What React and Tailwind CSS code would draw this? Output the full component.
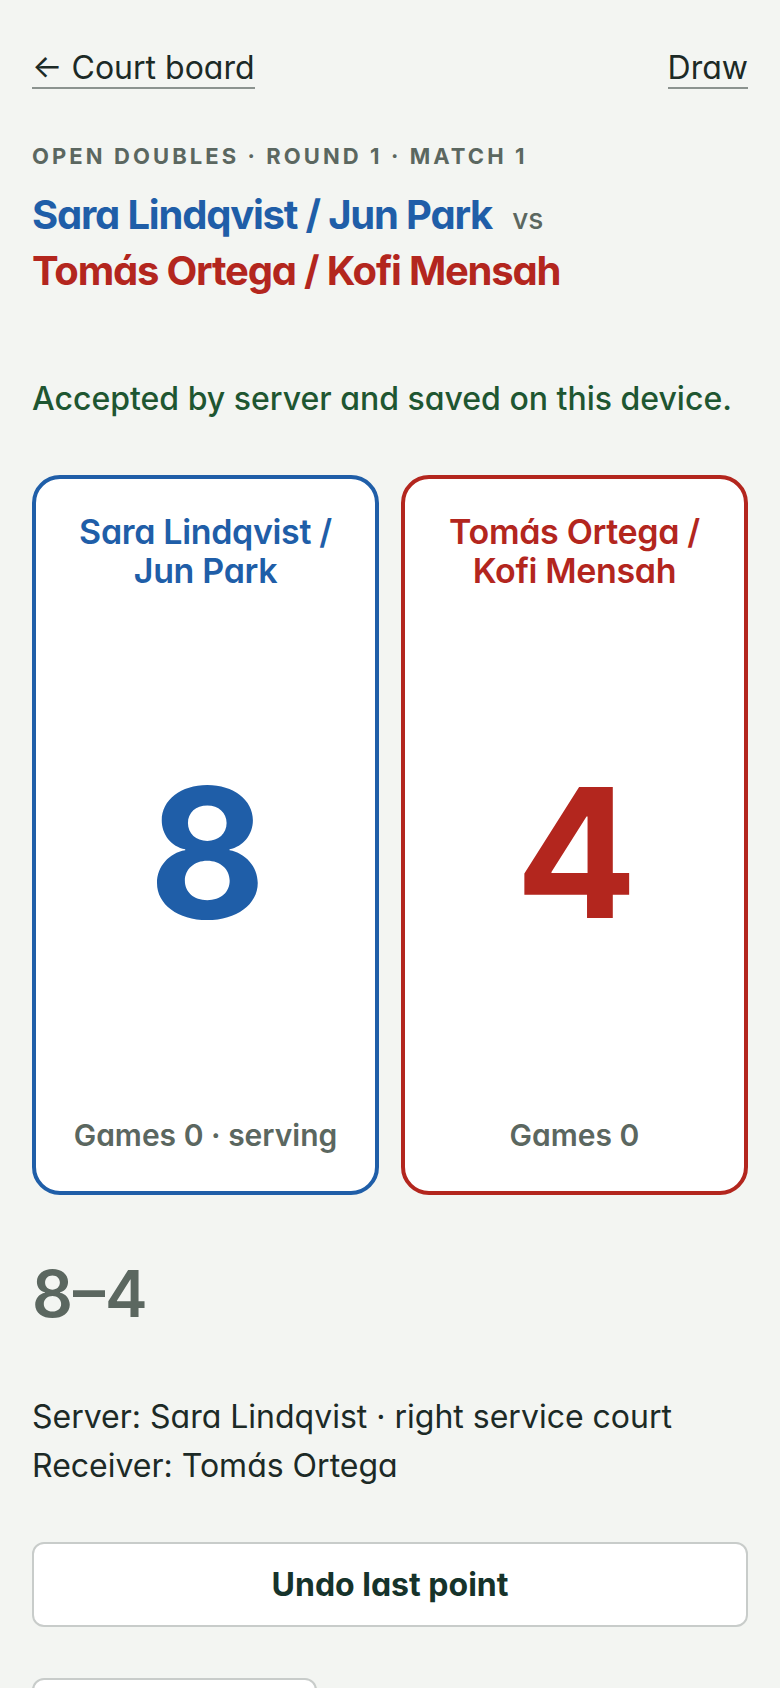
const font = "font-['Inter','Noto_Sans',sans-serif] [font-feature-settings:'cv11']";

function TeamCard({ name, score, games, tone }) {
  const border = tone === 'blue' ? 'border-[#1f5ea8]' : 'border-[#b3261e]';
  const text = tone === 'blue' ? 'text-[#1f5ea8]' : 'text-[#b3261e]';
  return (
    <div className={`flex h-[720px] flex-col rounded-[28px] border-4 ${border} bg-white px-5 pb-[37px] pt-[33px] text-center`}>
      <div className={`px-2 text-[34px] font-semibold leading-[39px] tracking-[-0.01em] ${text}`}>{name}</div>
      <div className="flex flex-1 items-center justify-center">
        <span className={`text-[180px] font-bold leading-none tracking-[-0.02em] ${text}`}>{score}</span>
      </div>
      <div className="text-[30px] font-semibold leading-[38px] text-[#5b6760]">{games}</div>
    </div>
  );
}

export default function App() {
  return (
    <div className={`min-h-screen bg-[#f3f5f2] px-8 pt-[49px] text-[#1c2a26] ${font}`}>
      <div className="flex items-start justify-between">
        <a className="border-b-2 border-[#8b938f] text-[32px] leading-[38px] text-[#1c2a26]">← Court board</a>
        <a className="border-b-2 border-[#8b938f] text-[32px] leading-[38px] text-[#1c2a26]">Draw</a>
      </div>

      <div className="mt-[52px] text-[22px] font-bold uppercase leading-[30px] tracking-[0.14em] text-[#5b6760]">
        Open Doubles · Round 1 · Match 1
      </div>
      <h1 className="mt-[18px] text-[40px] font-bold leading-[51px] tracking-[-0.03em]">
        <div className="flex items-baseline">
          <span className="text-[#1f5ea8]">Sara Lindqvist / Jun Park</span>
          <span className="ml-5 text-[28px] font-medium tracking-normal text-[#5b6760]">vs</span>
        </div>
        <div className="text-[#b3261e]">Tomás Ortega / Kofi Mensah</div>
      </h1>

      <p className="mt-[83px] text-[32px] font-medium leading-[40px] text-[#1e5631]">
        Accepted by server and saved on this device.
      </p>

      <div className="mt-[56px] grid grid-cols-2 gap-[22px]">
        <TeamCard name="Sara Lindqvist / Jun Park" score="8" games="Games 0 · serving" tone="blue" />
        <TeamCard name="Tomás Ortega / Kofi Mensah" score="4" games="Games 0" tone="red" />
      </div>

      <div className="mt-[67px] text-[64px] font-semibold leading-none text-[#5b6760]">8–4</div>

      <div className="mt-[66px] text-[32px] leading-[49px]">
        <div>Server: Sara Lindqvist · right service court</div>
        <div>Receiver: Tomás Ortega</div>
      </div>

      <button type="button" className="mt-[52px] block h-[85px] w-full rounded-xl border-2 border-[#c8ccca] bg-white text-[32px] font-bold text-[#16332b]">
        Undo last point
      </button>

      <button type="button" className="mt-[51px] block h-[85px] w-[285px] rounded-xl border-2 border-[#c8ccca] bg-white text-[32px] font-bold text-[#16332b]">
        End match
      </button>
    </div>
  );
}
